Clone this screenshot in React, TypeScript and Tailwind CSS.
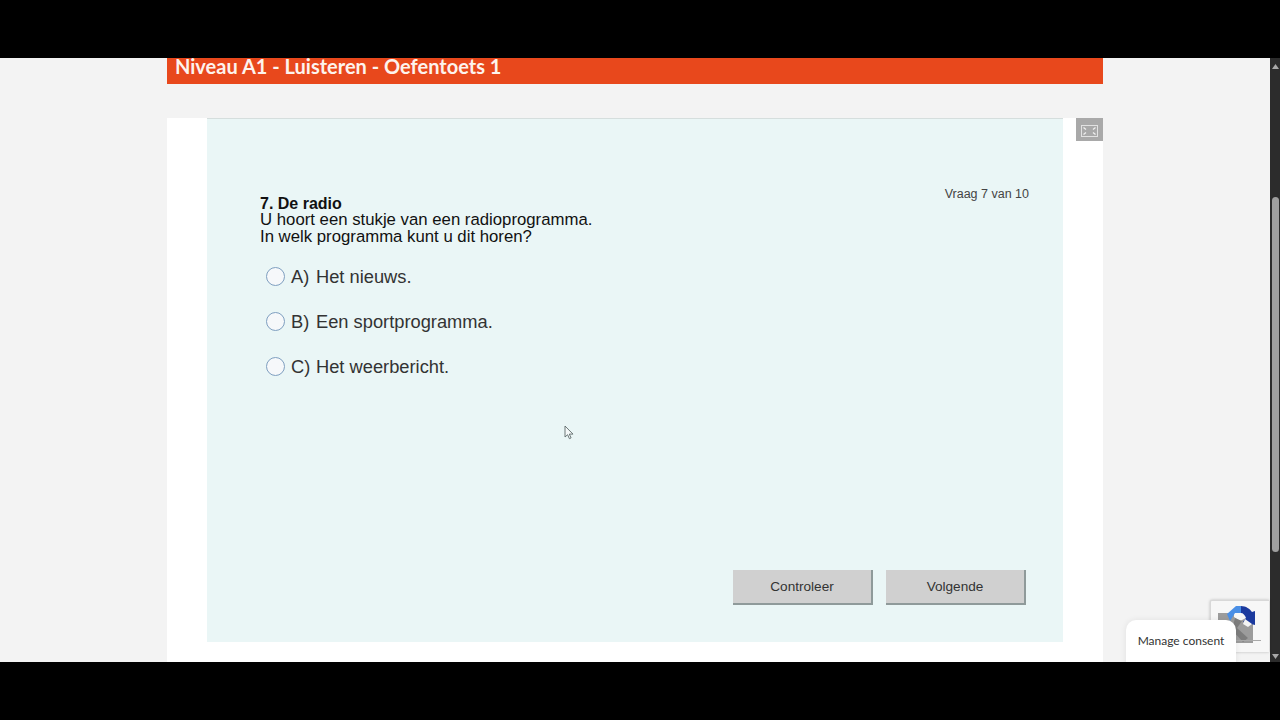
import React from 'react';

const OPTIONS = [
  { key: 'A)', label: 'Het nieuws.' },
  { key: 'B)', label: 'Een sportprogramma.' },
  { key: 'C)', label: 'Het weerbericht.' },
];

const Option: React.FC<{ optionKey: string; label: string }> = ({ optionKey, label }) => (
  <div className="flex h-[45px] items-center">
    <span className="ml-[6px] h-[19px] w-[19px] rounded-full border border-[#7f9fc0] bg-[#f6f8fa]" />
    <span className="ml-[6px] w-[25px] text-[#333]">{optionKey}</span>
    <span className="text-[#333]">{label}</span>
  </div>
);

const GameButton: React.FC<{ label: string }> = ({ label }) => (
  <button className="h-[35px] w-[140px] border-r-2 border-b-2 border-[#8f9a9a] bg-[#d0d0d0] pt-px text-[13.6px] text-[#333]">
    {label}
  </button>
);

const App: React.FC = () => {
  return (
    <div className="flex h-[720px] w-[1280px] flex-col overflow-hidden bg-black font-['Liberation_Sans',sans-serif]">
      <div className="h-[58px]" />

      <div className="relative flex h-[604px] overflow-hidden bg-[#f3f3f3]">
        <main className="ml-[167px] w-[936px]">
          <header className="h-[26px] bg-[#e8481c] pl-2 font-['Lato',sans-serif] text-[20px] font-bold leading-[17px] text-[#fdf3ee]">
            Niveau A1 - Luisteren - Oefentoets 1
          </header>

          <div className="relative mt-[34px] h-[544px] bg-white px-10 pb-5">
            <section className="flex h-[524px] flex-col border-t border-[#d5dedd] bg-[#eaf6f6] pl-[53px] pr-[34px]">
              <div className="mt-[76px] flex justify-between">
                <div className="text-[16.75px] leading-[17px] text-[#111]">
                  <div className="h-[16px] text-[16px] font-bold">7. De radio</div>
                  <div>U hoort een stukje van een radioprogramma.</div>
                  <div>In welk programma kunt u dit horen?</div>
                </div>
                <div className="-mt-[9px] text-[12.5px] leading-[17px] text-[#444]">Vraag 7 van 10</div>
              </div>

              <div className="mt-[9px] text-[18.3px]">
                {OPTIONS.map(o => (
                  <Option key={o.key} optionKey={o.key} label={o.label} />
                ))}
              </div>

              <div className="mt-auto mb-[37px] flex justify-end gap-[13px] pr-[3px]">
                <GameButton label="Controleer" />
                <GameButton label="Volgende" />
              </div>
            </section>

            {/* Fullscreen toggle */}
            <button className="absolute right-0 top-0 flex h-[23px] w-[27px] items-center justify-center bg-[#a9a9a9] pt-[2px]">
              <svg width="17" height="12" viewBox="0 0 17 12" fill="none">
                <rect x="0.5" y="0.5" width="16" height="11" stroke="#e2e2e2" />
                <path d="M2.5 2.5l2.5 2M14.5 2.5l-2.5 2M2.5 9.5l2.5-2M14.5 9.5l-2.5-2" stroke="#f0f0f0" strokeWidth="1.3" />
              </svg>
            </button>
          </div>
        </main>

        {/* Browser scrollbar */}
        <div className="ml-auto flex w-[11px] flex-col items-center border-l border-[#f3f3f3] bg-[#2c2c2c]">
          <svg className="mt-[6px]" width="7" height="5" viewBox="0 0 7 5">
            <path d="M3.5 0L7 5H0z" fill="#a8a8a8" />
          </svg>
          <div className="mt-[128px] h-[355px] w-[7px] rounded-full bg-[#9f9f9f]" />
          <svg className="mt-auto mb-[3px]" width="7" height="5" viewBox="0 0 7 5">
            <path d="M3.5 5L7 0H0z" fill="#a8a8a8" />
          </svg>
        </div>

        {/* reCAPTCHA badge */}
        <div className="absolute left-[1210px] top-[542px] h-[52px] w-[59px] rounded-tl-[2px] border-l border-t border-[#d8d8d8] bg-[#f7f7f7] shadow-[0_0_3px_rgba(0,0,0,0.25)]">
          <svg className="absolute left-[7px] top-[4px]" width="38" height="40" viewBox="0 0 38 40">
            <path d="M0 8h16v4l6 4 8-4 5 6v20H0z" fill="#9c9c9c" />
            <path d="M9 9L18 1h5v7h-6l-5 8z" fill="#4a8fe6" />
            <path d="M23 1c5 0 9 3 11 6l3-1v14l-12-3 3-4c-1-3-3-5-5-5z" fill="#1c3a9e" />
            <path d="M17 13l7 3-5 7 11 10-5 4-11-12z" fill="#7d7d7d" />
            <path d="M27 14l7 5-4 3-5-3z" fill="#f4f4f4" />
          </svg>
          <div className="absolute left-[24px] top-[39px] h-px w-[26px] bg-[#a9a9a9]" />
        </div>

        {/* Consent tab */}
        <div className="absolute left-[1126px] top-[562px] flex h-[60px] w-[110px] justify-center rounded-t-[10px] bg-white pt-[13px] font-['Lato',sans-serif] text-[12px] leading-[16px] text-[#333] shadow-[0_0_6px_rgba(0,0,0,0.08)]">
          Manage consent
        </div>

        {/* Mouse cursor */}
        <svg className="absolute left-[564px] top-[367px]" width="10" height="15" viewBox="0 0 10 15">
          <path d="M1 1v11l2.6-2.3 1.8 4 1.7-.8-1.8-3.8H9z" fill="#f4f8f8" stroke="#5d6a6a" strokeWidth="0.9" />
        </svg>
      </div>

      <div className="flex-1" />
    </div>
  );
};

export default App;
